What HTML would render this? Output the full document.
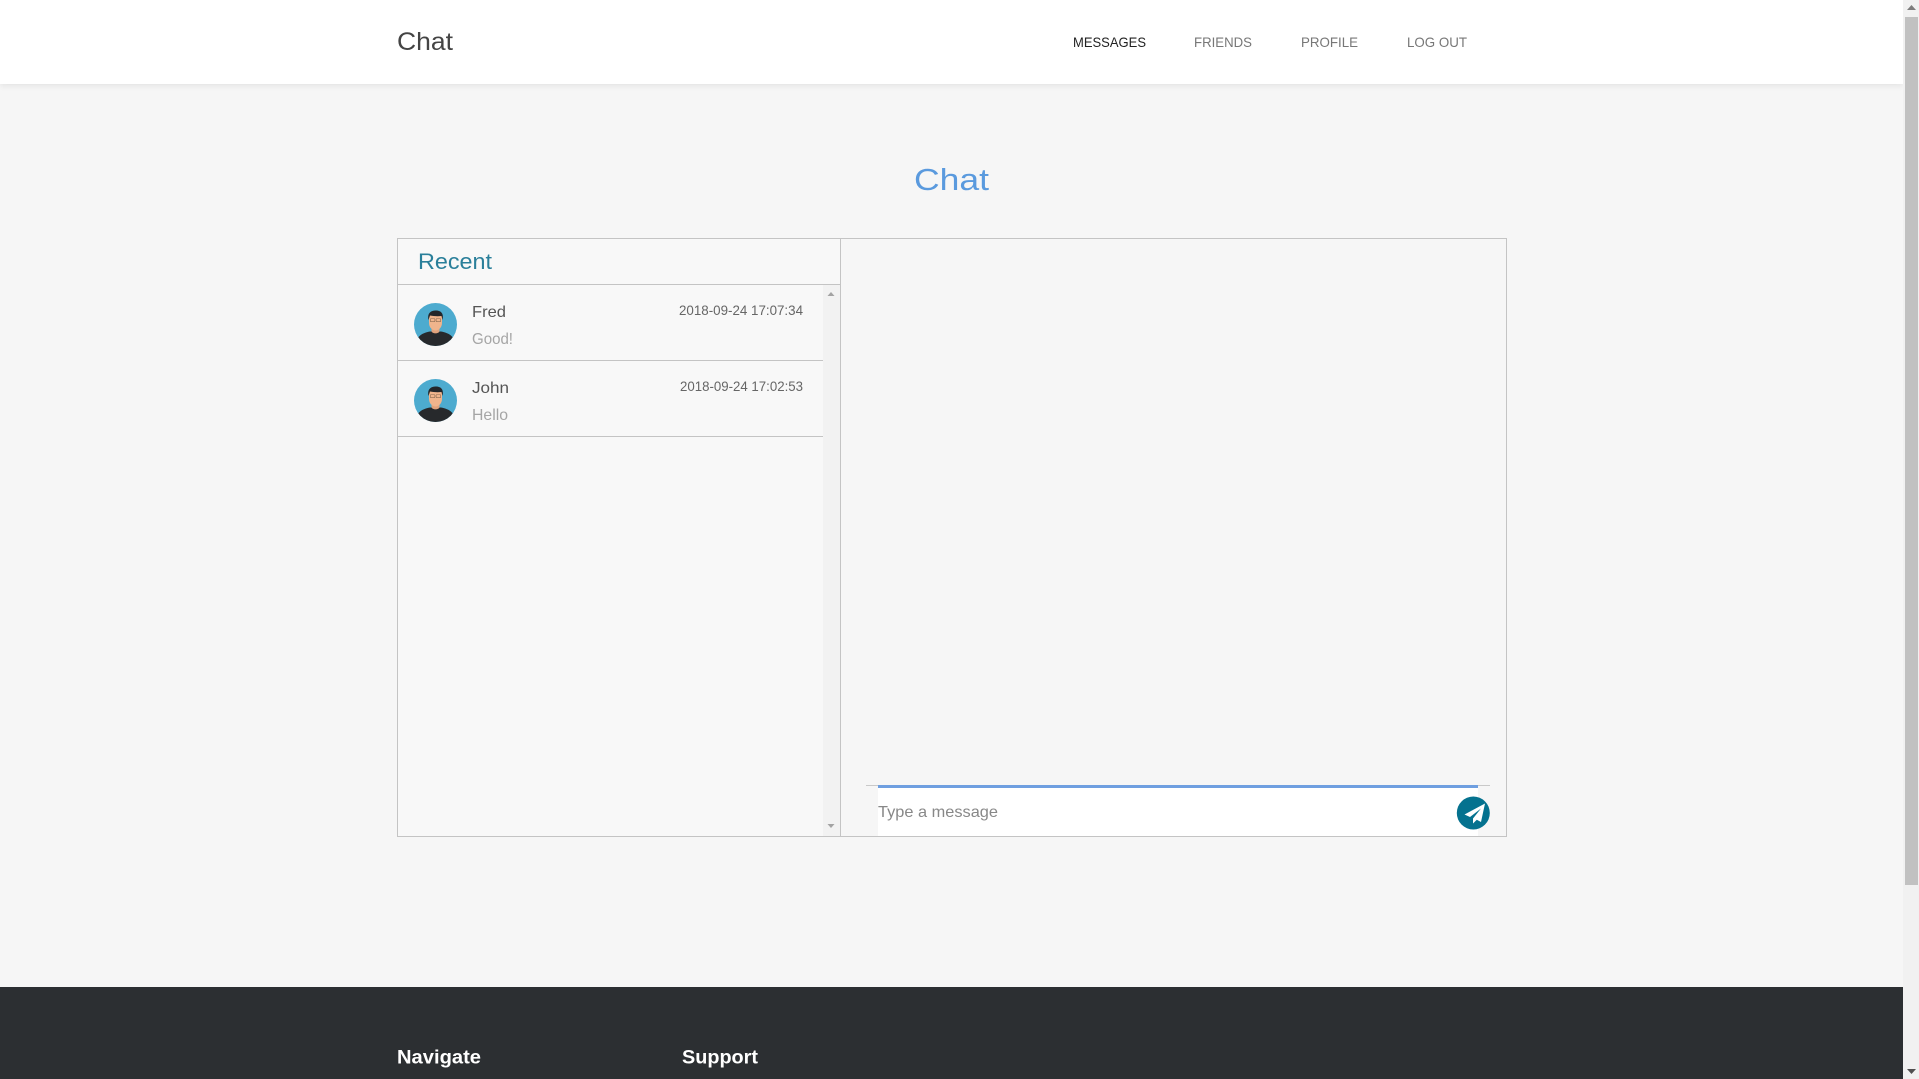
<!DOCTYPE html>
<html lang="en">
<head>
<meta charset="utf-8">
<title>Chat</title>
<style>
html,body{margin:0;padding:0;width:1919px;height:1079px;overflow:hidden;background:#f6f6f6;font-family:"Liberation Sans",sans-serif}
div{position:absolute;box-sizing:border-box}
svg{position:absolute;left:0;top:0}
text{font-family:"Liberation Sans",sans-serif}
</style>
</head>
<body>
<div style="left:0;top:0;width:1903px;height:84px;background:#fff;box-shadow:0 2px 6px rgba(0,0,0,.08)"></div>
<div style="left:0;top:987px;width:1903px;height:92px;background:#2c2f32"></div>

<!-- page scrollbar -->
<div style="left:1903px;top:0;width:16px;height:1079px;background:#f1f1f1"></div>
<div style="left:1905px;top:17px;width:13px;height:868px;background:#c1c1c1"></div>

<!-- chat panel -->
<div style="left:397px;top:238px;width:1110px;height:599px;border:1px solid #c4c4c4;background:#f6f6f6"></div>
<div style="left:398px;top:239px;width:443px;height:597px;background:#f8f8f8;border-right:1px solid #c4c4c4"></div>
<div style="left:398px;top:284px;width:442px;height:1px;background:#c4c4c4"></div>
<div style="left:823px;top:285px;width:17px;height:551px;background:#f2f2f2"></div>
<div style="left:398px;top:360px;width:425px;height:1px;background:#c4c4c4"></div>
<div style="left:398px;top:436px;width:425px;height:1px;background:#c4c4c4"></div>

<!-- input -->
<div style="left:866px;top:785px;width:624px;height:1px;background:#c9c9c9"></div>
<div style="left:878px;top:786px;width:600px;height:50px;background:#fff"></div>
<div style="left:878px;top:785px;width:600px;height:3px;background:#6f9fe0"></div>

<svg width="1919" height="1079" viewBox="0 0 1919 1079" xmlns="http://www.w3.org/2000/svg">
<defs>
<clipPath id="c1"><circle cx="435.5" cy="324.5" r="21.5"/></clipPath>
<clipPath id="c2"><circle cx="435.5" cy="400.5" r="21.5"/></clipPath>
<g id="face">
<path d="M415 347 C416 336 422 333 430 331.5 L441 331.5 C449 333 455 336 456 347 Z" fill="#27292c"/>
<path d="M431.5 326 H439.5 V331.5 C438 334 433 334 431.5 331.5 Z" fill="#e0a27c"/>
<path d="M429 315 H442 V323 C442 328 438 330.5 435.5 330.5 C433 330.5 429 328 429 323 Z" fill="#f0b48c"/>
<path d="M428.5 320 C427 313 431 310.500 436 310.500 C441 310.500 444 313.500 442.500 320 L441.500 316 C437 316.500 433 316 430 315.500 Z" fill="#23262a"/>
<rect x="430.300" y="318.500" width="4.600" height="3.200" rx="1" fill="none" stroke="#8a6a50" stroke-width=".6"/>
<rect x="436.100" y="318.500" width="4.600" height="3.200" rx="1" fill="none" stroke="#8a6a50" stroke-width=".6"/>
</g>
</defs>

<!-- avatars -->
<circle cx="435.5" cy="324.5" r="21.5" fill="#4dabcf"/>
<g clip-path="url(#c1)"><use href="#face"/></g>
<circle cx="435.5" cy="400.5" r="21.5" fill="#4dabcf"/>
<g clip-path="url(#c2)"><use href="#face" y="76"/></g>

<!-- send button -->
<circle cx="1473.300" cy="813" r="16.500" fill="#05728f"/>
<path d="M1485 803.500 L1464.500 814.500 L1470 817 L1481 808.500 L1473 818.500 L1473 823.500 L1476.800 819.800 L1481 822 Z" fill="#fff"/>

<!-- scroll arrows -->
<path d="M827.500 296 L831 292 L834.500 296 Z" fill="#a3a3a3"/>
<path d="M827.500 824 L834.500 824 L831 828 Z" fill="#a3a3a3"/>
<path d="M1907 10 L1911.500 5 L1916 10 Z" fill="#7d7d7d"/>
<path d="M1907 1069 L1916 1069 L1911.500 1074 Z" fill="#505050"/>

<!-- header -->
<text x="397" y="50" font-size="25" fill="#444" textLength="56" lengthAdjust="spacingAndGlyphs">Chat</text>
<text x="1073" y="47" font-size="14" fill="#222" textLength="73" lengthAdjust="spacingAndGlyphs">MESSAGES</text>
<text x="1194" y="47" font-size="14" fill="#777" textLength="58" lengthAdjust="spacingAndGlyphs">FRIENDS</text>
<text x="1301" y="47" font-size="14" fill="#777" textLength="57" lengthAdjust="spacingAndGlyphs">PROFILE</text>
<text x="1407" y="47" font-size="14" fill="#777" textLength="60" lengthAdjust="spacingAndGlyphs">LOG OUT</text>

<!-- title -->
<text x="914" y="190" font-size="31" fill="#5a9ade" textLength="75" lengthAdjust="spacingAndGlyphs">Chat</text>
<text x="418" y="269" font-size="22" fill="#2a7f9a" textLength="74" lengthAdjust="spacingAndGlyphs">Recent</text>

<!-- list -->
<text x="472" y="317" font-size="16" fill="#555" textLength="34" lengthAdjust="spacingAndGlyphs">Fred</text>
<text x="679" y="315" font-size="14" fill="#666" textLength="124" lengthAdjust="spacingAndGlyphs">2018-09-24 17:07:34</text>
<text x="472" y="344" font-size="16" fill="#a5a5a5" textLength="41" lengthAdjust="spacingAndGlyphs">Good!</text>
<text x="472" y="393" font-size="16" fill="#555" textLength="37" lengthAdjust="spacingAndGlyphs">John</text>
<text x="680" y="391" font-size="14" fill="#666" textLength="123" lengthAdjust="spacingAndGlyphs">2018-09-24 17:02:53</text>
<text x="472" y="420" font-size="16" fill="#a5a5a5" textLength="36" lengthAdjust="spacingAndGlyphs">Hello</text>

<!-- input placeholder -->
<text x="878" y="817" font-size="16" fill="#888" textLength="120" lengthAdjust="spacingAndGlyphs">Type a message</text>

<!-- footer -->
<text x="397" y="1063.500" font-size="19" font-weight="700" fill="#fff" textLength="84" lengthAdjust="spacingAndGlyphs">Navigate</text>
<text x="682" y="1063.500" font-size="19" font-weight="700" fill="#fff" textLength="76" lengthAdjust="spacingAndGlyphs">Support</text>
</svg>
</body>
</html>
